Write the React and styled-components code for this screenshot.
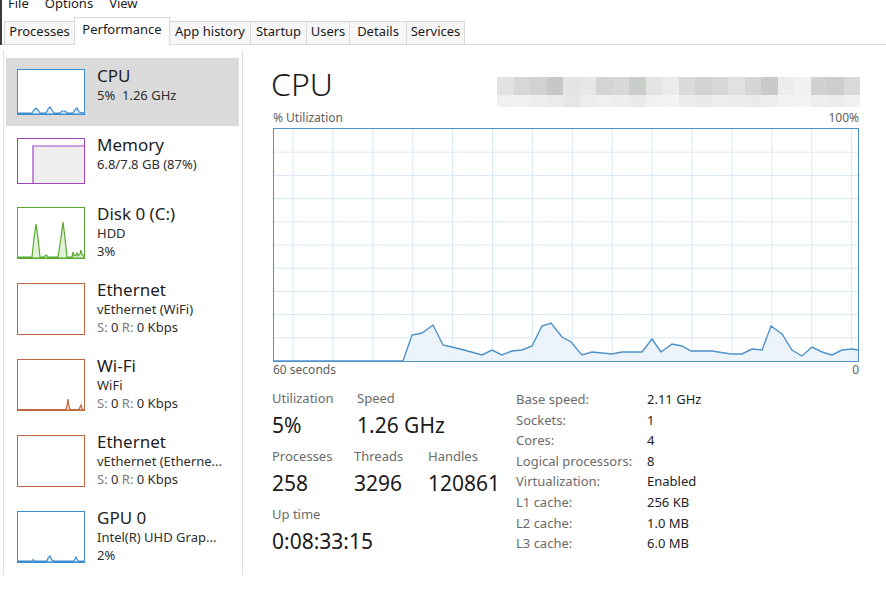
import React from "react";
import styled, { createGlobalStyle } from "styled-components";

const GlobalStyle = createGlobalStyle`
  html, body {
    margin: 0;
    padding: 0;
    background: #fff;
  }
  body {
    font-family: "Noto Sans", "Open Sans", sans-serif;
    color: #1b1b1b;
    overflow: hidden;
  }
`;

const Page = styled.div`
  width: 886px;
  height: 590px;
  display: flex;
  flex-direction: column;
  background: #fff;
`;

const Header = styled.div`
  border-left: 2px solid #3a3a3a;
`;

const MenuBar = styled.div`
  height: 14px;
  overflow: hidden;
  display: flex;
  gap: 16px;
  padding-left: 6px;
`;

const MenuItem = styled.span`
  font-size: 13px;
  line-height: 16px;
  margin-top: -5px;
  color: #1b1b1b;
`;

const TabBar = styled.div`
  height: 30px;
  display: flex;
  align-items: flex-end;
  padding-left: 2px;
  border-bottom: 1px solid #d9d9d9;
`;

const Tab = styled.div`
  position: relative;
  box-sizing: border-box;
  width: ${(p) => p.$w}px;
  text-align: center;
  font-size: 13px;
  color: #1b1b1b;
  border: 1px solid #d9d9d9;
  border-bottom: none;
  margin-right: -1px;
  white-space: nowrap;
  height: ${(p) => (p.$active ? "28px" : "23px")};
  margin-bottom: ${(p) => (p.$active ? "-1px" : "0")};
  padding-top: ${(p) => (p.$active ? "1px" : "0")};
  line-height: ${(p) => (p.$active ? "20px" : "18px")};
  background: ${(p) => (p.$active ? "#ffffff" : "#f7f7f7")};
  z-index: ${(p) => (p.$active ? 1 : 0)};
`;

const Body = styled.div`
  flex: 1;
  display: flex;
  min-height: 0;
`;

const Sidebar = styled.div`
  width: 233px;
  margin-left: 3px;
  margin-top: 5px;
  margin-bottom: 15px;
  padding: 8px 3px 0 2px;
  border-left: 1px solid #e2e2e2;
  border-right: 1px solid #dcdcdc;
  display: flex;
  flex-direction: column;
  gap: 1px;
  box-sizing: content-box;
  flex: none;
`;

const Item = styled.div`
  display: flex;
  gap: 12px;
  padding: 11px;
  background: ${(p) => (p.$selected ? "#dadada" : "transparent")};
`;

const Thumb = styled.div`
  flex: none;
  width: 66px;
  height: ${(p) => p.$h - 2}px;
  border: 1px solid ${(p) => p.$color};
  background: #fff;

  svg {
    display: block;
    width: 100%;
    height: 100%;
  }
`;

const ItemText = styled.div`
  margin-top: -4px;
  min-width: 0;
`;

const ItemTitle = styled.div`
  font-size: 17px;
  line-height: 21px;
  color: #1e1e1e;
`;

const ItemLine = styled.div`
  font-size: 13px;
  line-height: 18px;
  color: #2e2e2e;
  white-space: nowrap;
`;

const Muted = styled.span`
  color: #7c7c7c;
`;

const Main = styled.div`
  flex: 1;
  padding: 21px 26px 0 29px;
  min-width: 0;
`;

const TitleRow = styled.div`
  display: flex;
  justify-content: space-between;
  align-items: flex-start;
  height: 41px;
`;

const BigTitle = styled.div`
  font-size: 32px;
  line-height: 35px;
  font-weight: 300;
  color: #1b1b1b;
  margin-left: -1px;
`;

const Mosaic = styled.div`
  margin-top: 11px;
  width: 363px;
  display: grid;
  grid-template-columns: repeat(22, 1fr);
  grid-template-rows: 18px 12px;
`;

const MosaicCell = styled.div`
  background: ${(p) => p.$c};
`;

const AxisRow = styled.div`
  display: flex;
  justify-content: space-between;
  font-size: 12px;
  line-height: 16px;
  color: #5f5f5f;
  margin-top: ${(p) => p.$top || 0}px;
  padding: 0 1px;
`;

const Graph = styled.div`
  margin: 2px 1px 0;
  height: 232px;
  border: 1px solid #4d92cb;

  svg {
    display: block;
    width: 100%;
    height: 100%;
  }
`;

const Stats = styled.div`
  display: flex;
  margin-top: 11px;
`;

const LeftStats = styled.div`
  width: 244px;
  flex: none;
`;

const StatRow = styled.div`
  display: flex;
  & + & {
    margin-top: 8px;
  }
`;

const Stat = styled.div`
  width: ${(p) => (p.$w ? `${p.$w}px` : "auto")};
  flex: none;
`;

const StatLabel = styled.div`
  font-size: 13px;
  line-height: 18px;
  color: #6b6b6b;
`;

const StatValue = styled.div`
  font-size: 21px;
  line-height: 28px;
  margin-top: 4px;
  color: #1b1b1b;
`;

const SpecTable = styled.div`
  display: grid;
  grid-template-columns: 131px auto;
  font-size: 13px;
  line-height: 20.6px;
  align-content: start;
`;

const SpecLabel = styled.div`
  color: #6b6b6b;
`;

const SpecValue = styled.div`
  color: #1e1e1e;
`;

const BLUE = "#3c8dce";
const BLUE_FILL = "#e1edf8";

const sideItems = [
  {
    title: "CPU",
    color: BLUE,
    h: 46,
    selected: true,
    lines: [<>5%&nbsp; 1.26 GHz</>],
    chart: (
      <svg viewBox="0 0 66 44" preserveAspectRatio="none">
        <path
          d="M0 44 L0 43 L14 43 L16 40 L18 38 L20 40 L22 43 L28 43 L30 39 L32 37 L34 40 L36 43 L42 43 L44 41 L47 41 L49 43 L55 43 L57 40 L59 38 L61 42 L66 43 L66 44 Z"
          fill={BLUE_FILL}
          stroke={BLUE}
          strokeWidth="1.2"
        />
      </svg>
    ),
  },
  {
    title: "Memory",
    color: "#a044c2",
    h: 46,
    lines: ["6.8/7.8 GB (87%)"],
    chart: (
      <svg viewBox="0 0 66 44" preserveAspectRatio="none">
        <path d="M15 45 V7 H67 V45 Z" fill="#eeeeee" stroke="#a044c2" strokeWidth="1.2" />
      </svg>
    ),
  },
  {
    title: "Disk 0 (C:)",
    color: "#58aa30",
    h: 52,
    lines: ["HDD", "3%"],
    chart: (
      <svg viewBox="0 0 66 50" preserveAspectRatio="none">
        <path
          d="M0 50 L0 49 L14 49 L16 30 L18 16 L20 30 L22 49 L26 49 L28 47 L30 49 L40 49 L43 30 L45 14 L47 30 L49 49 L54 49 L55 44 L56 48 L58 47 L59 45 L60 48 L62 46 L63 42 L64 47 L66 47 L66 50 Z"
          fill="#e3f1d8"
          stroke="#58aa30"
          strokeWidth="1.2"
        />
      </svg>
    ),
  },
  {
    title: "Ethernet",
    color: "#c2673e",
    h: 52,
    lines: [
      "vEthernet (WiFi)",
      <>
        <Muted>S:</Muted> 0 <Muted>R:</Muted> 0 Kbps
      </>,
    ],
  },
  {
    title: "Wi-Fi",
    color: "#c2673e",
    h: 52,
    lines: [
      "WiFi",
      <>
        <Muted>S:</Muted> 0 <Muted>R:</Muted> 0 Kbps
      </>,
    ],
    chart: (
      <svg viewBox="0 0 66 50" preserveAspectRatio="none">
        <path
          d="M0 50 L0 49.5 L48 49.5 L49 46 L50 39 L51 46 L52 49.5 L61 49.5 L62 47 L63 45 L64 49 L66 49.5 L66 50 Z"
          fill="#f5e3da"
          stroke="#c2673e"
          strokeWidth="1.2"
        />
      </svg>
    ),
  },
  {
    title: "Ethernet",
    color: "#c2673e",
    h: 52,
    lines: [
      "vEthernet (Etherne...",
      <>
        <Muted>S:</Muted> 0 <Muted>R:</Muted> 0 Kbps
      </>,
    ],
  },
  {
    title: "GPU 0",
    color: BLUE,
    h: 52,
    lines: ["Intel(R) UHD Grap...", "2%"],
    chart: (
      <svg viewBox="0 0 66 50" preserveAspectRatio="none">
        <path
          d="M0 50 L0 49 L14 49 L15 47.5 L16 49 L29 49 L30 46 L32 44 L34 48 L36 49 L56 49 L58 45 L60 49 L66 49 L66 50 Z"
          fill={BLUE_FILL}
          stroke={BLUE}
          strokeWidth="1.2"
        />
      </svg>
    ),
  },
];

const mosaicTop = [
  "#e2e2e2", "#d7d7d7", "#d2d2d2", "#c7c7c5", "#e4e4e4", "#e7e7e7", "#d4d4d2",
  "#d8d8d6", "#cbcdcb", "#e3e3e3", "#ebebeb", "#dadada", "#d3d3d3", "#d7d7d7",
  "#e1e1e1", "#d5d5d5", "#c9c9c9", "#ececec", "#f1f1f1", "#d1d1d1", "#cdcdcd",
  "#d9d9d9",
];

const mosaicBottom = [
  "#f0f0f0", "#f1f1f1", "#eeeeee", "#ebebeb", "#e6e6e6", "#ededed", "#f0f0f0",
  "#eeeeee", "#eaeaea", "#f1f1f1", "#f3f3f3", "#ececec", "#eaeaea", "#eeeeee",
  "#ececec", "#eaeaea", "#eeeeee", "#f2f2f2", "#f4f4f4", "#eeeeee", "#ececec",
  "#f0f0f0",
];

// utilisation samples: [x inside graph, height in px above the floor]
const cpuSamples = [
  [0, 0], [129, 0], [138, 26], [148, 28], [159, 36], [169, 16], [178, 14],
  [190, 11], [208, 6], [218, 11], [228, 6], [238, 10], [248, 11], [258, 15],
  [268, 35], [277, 38], [288, 24], [297, 19], [308, 6], [318, 9], [338, 7],
  [348, 9], [368, 9], [378, 22], [387, 9], [398, 17], [408, 15], [417, 10],
  [438, 10], [457, 7], [468, 7], [478, 12], [488, 11], [497, 35], [508, 27],
  [518, 11], [528, 5], [538, 14], [548, 9], [558, 6], [568, 11], [578, 12],
  [584, 11],
];

const GW = 584;
const GH = 232;

function CpuGraph() {
  const rows = Array.from({ length: 9 }, (_, i) => (GH / 10) * (i + 1));
  const cols = Array.from({ length: 15 }, (_, i) => 19 + i * 39.9);
  const line = cpuSamples.map(([x, h]) => `${x},${GH - h}`).join(" ");
  const area = `0,${GH} ${line} ${GW},${GH}`;
  return (
    <svg viewBox={`0 0 ${GW} ${GH}`} preserveAspectRatio="none">
      {rows.map((y) => (
        <line key={`r${y}`} x1="0" x2={GW} y1={y} y2={y} stroke="#d9e8f5" strokeWidth="1" />
      ))}
      {cols.map((x) => (
        <line key={`c${x}`} x1={x} x2={x} y1="0" y2={GH} stroke="#d9e8f5" strokeWidth="1" />
      ))}
      <polygon points={area} fill="#e9f1f9" fillOpacity="0.85" />
      <polyline points={line} fill="none" stroke="#4d92cb" strokeWidth="1.4" />
    </svg>
  );
}

const specs = [
  ["Base speed:", "2.11 GHz"],
  ["Sockets:", "1"],
  ["Cores:", "4"],
  ["Logical processors:", "8"],
  ["Virtualization:", "Enabled"],
  ["L1 cache:", "256 KB"],
  ["L2 cache:", "1.0 MB"],
  ["L3 cache:", "6.0 MB"],
];

const tabs = [
  ["Processes", 71],
  ["Performance", 96],
  ["App history", 82],
  ["Startup", 57],
  ["Users", 44],
  ["Details", 58],
  ["Services", 59],
];

export default function App() {
  return (
    <Page>
      <GlobalStyle />
      <Header>
        <MenuBar>
          <MenuItem>File</MenuItem>
          <MenuItem>Options</MenuItem>
          <MenuItem>View</MenuItem>
        </MenuBar>
        <TabBar>
          {tabs.map(([t, w]) => (
            <Tab key={t} $w={w} $active={t === "Performance"}>
              {t}
            </Tab>
          ))}
        </TabBar>
      </Header>

      <Body>
        <Sidebar>
          {sideItems.map((it, i) => (
            <Item key={i} $selected={it.selected}>
              <Thumb $color={it.color} $h={it.h}>
                {it.chart}
              </Thumb>
              <ItemText>
                <ItemTitle>{it.title}</ItemTitle>
                {it.lines.map((l, j) => (
                  <ItemLine key={j}>{l}</ItemLine>
                ))}
              </ItemText>
            </Item>
          ))}
        </Sidebar>

        <Main>
          <TitleRow>
            <BigTitle>CPU</BigTitle>
            <Mosaic>
              {mosaicTop.map((c, i) => (
                <MosaicCell key={`t${i}`} $c={c} />
              ))}
              {mosaicBottom.map((c, i) => (
                <MosaicCell key={`b${i}`} $c={c} />
              ))}
            </Mosaic>
          </TitleRow>

          <AxisRow $top={3}>
            <span>% Utilization</span>
            <span>100%</span>
          </AxisRow>
          <Graph>
            <CpuGraph />
          </Graph>
          <AxisRow>
            <span>60 seconds</span>
            <span>0</span>
          </AxisRow>

          <Stats>
            <LeftStats>
              <StatRow>
                <Stat $w={85}>
                  <StatLabel>Utilization</StatLabel>
                  <StatValue>5%</StatValue>
                </Stat>
                <Stat>
                  <StatLabel>Speed</StatLabel>
                  <StatValue>1.26 GHz</StatValue>
                </Stat>
              </StatRow>
              <StatRow>
                <Stat $w={82}>
                  <StatLabel>Processes</StatLabel>
                  <StatValue>258</StatValue>
                </Stat>
                <Stat $w={74}>
                  <StatLabel>Threads</StatLabel>
                  <StatValue>3296</StatValue>
                </Stat>
                <Stat>
                  <StatLabel>Handles</StatLabel>
                  <StatValue>120861</StatValue>
                </Stat>
              </StatRow>
              <StatRow>
                <Stat>
                  <StatLabel>Up time</StatLabel>
                  <StatValue>0:08:33:15</StatValue>
                </Stat>
              </StatRow>
            </LeftStats>
            <SpecTable>
              {specs.map(([k, v]) => (
                <React.Fragment key={k}>
                  <SpecLabel>{k}</SpecLabel>
                  <SpecValue>{v}</SpecValue>
                </React.Fragment>
              ))}
            </SpecTable>
          </Stats>
        </Main>
      </Body>
    </Page>
  );
}
